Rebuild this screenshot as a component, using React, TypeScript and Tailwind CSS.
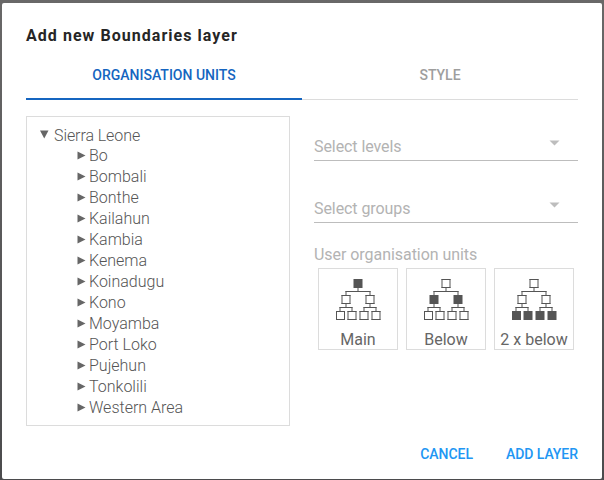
const districts = [
  'Bo', 'Bombali', 'Bonthe', 'Kailahun', 'Kambia', 'Kenema', 'Koinadugu',
  'Kono', 'Moyamba', 'Port Loko', 'Pujehun', 'Tonkolili', 'Western Area',
];

function Box({ x, y, filled }: { x: number; y: number; filled: boolean }) {
  return (
    <g>
      <rect x={x} y={y} width="9" height="9" fill={filled ? '#555' : '#fff'} />
      {!filled && (
        <>
          <path d={`M${x} ${y + 0.5}h9M${x} ${y + 8.5}h9`} stroke="#555" />
          <path d={`M${x + 0.5} ${y}v9M${x + 8.5} ${y}v9`} stroke="#555" />
        </>
      )}
    </g>
  );
}

function Hierarchy({ level }: { level: number }) {
  return (
    <svg width="46" height="41" viewBox="-0.5 0 46 41" fill="none" className="block shrink-0">
      <path d="M22.5 9v3M10.5 12v4M34.5 12v4M10.5 25v3M34.5 25v3M4.5 28v4M16.5 28v4M28.5 28v4M40.5 28v4" stroke="#555" />
      <path d="M10 12.5h25M4 28.5h13M28 28.5h13" stroke="#555" />
      <Box x={18} y={0} filled={level === 0} />
      <Box x={6} y={16} filled={level === 1} />
      <Box x={30} y={16} filled={level === 1} />
      {[0.5, 12, 24, 36].map((x) => (
        <Box key={x} x={x} y={32} filled={level === 2} />
      ))}
    </svg>
  );
}

function Select({ label }: { label: string }) {
  return (
    <div className="flex h-[45px] items-end justify-between border-b border-[#bdbdbd] pb-[3px] pr-[18px] text-[#b3b3b3]">
      <span className="text-[16px] leading-[20px] tracking-[-0.08px]">{label}</span>
      <svg width="11" height="6" viewBox="0 0 11 6" className="mb-[11px]">
        <path d="M0.5 0.5h10l-5 5z" fill="#bdbdbd" />
      </svg>
    </div>
  );
}

export default function App() {
  return (
    <div className="h-[480px] w-[604px] overflow-hidden bg-gradient-to-b from-[#696868] to-[#4b4b4d] px-[2px] pt-[3px] pb-px font-[Roboto,sans-serif]">
      <div className="flex h-[476px] flex-col rounded-[2px] bg-white px-6">
        <h1 className="mt-[21px] h-[26px] text-[16px] font-bold leading-[24px] tracking-[1.04px] text-[#262626]">
          Add new Boundaries layer
        </h1>
        <div className="flex h-[50px] text-center text-[14px] font-medium leading-[50px]">
          <div className="h-[50px] w-[276px] border-b-2 border-[#1565c0] text-[#1565c0]">ORGANISATION UNITS</div>
          <div className="h-[50px] w-[276px] border-b border-[#dcdcdc] text-[#9e9e9e]">STYLE</div>
        </div>
        <div className="mt-4 flex gap-6">
          <div className="h-[310px] w-[264px] border border-[#dcdcdc] pt-[8px] text-[16px] font-light text-[#555]">
            <div className="flex h-[20px] items-center pl-[13px] leading-[22px] tracking-[-0.08px]">
              <svg width="9" height="9" className="mr-[5px] -mt-[1px]"><path d="M0 0.5h8.5l-4.25 8z" fill="#666" /></svg>
              <span className="pt-[2px]">Sierra Leone</span>
            </div>
            {districts.map((name) => (
              <div key={name} className="flex h-[21px] items-center pl-[50px] leading-[21px]">
                <svg width="9" height="9" className="mr-[3px]"><path d="M0.5 0.5v8l8-4z" fill="#666" /></svg>
                {name}
              </div>
            ))}
          </div>
          <div className="w-[264px]">
            <Select label="Select levels" />
            <div className="h-[17px]" />
            <Select label="Select groups" />
            <div className="mt-[21px] text-[16px] leading-[21px] tracking-[-0.05px] text-[#b3b3b3]">User organisation units</div>
            <div className="mt-[3px] flex gap-2 pl-1">
              {['Main', 'Below', '2 x below'].map((label, i) => (
                <div key={label} className="flex h-[82px] w-20 flex-col items-center border border-[#dcdcdc] pt-[10px]">
                  <Hierarchy level={i} />
                  <span className="mt-[9px] h-[19px] text-[16px] leading-[21px] text-[#666]">{label}</span>
                </div>
              ))}
            </div>
          </div>
        </div>
        <div className="mt-[18px] flex justify-end gap-[33px] text-[14px] font-medium leading-[20px] tracking-[-0.05px] text-[#2196f3]">
          <button>CANCEL</button>
          <button>ADD LAYER</button>
        </div>
      </div>
    </div>
  );
}
